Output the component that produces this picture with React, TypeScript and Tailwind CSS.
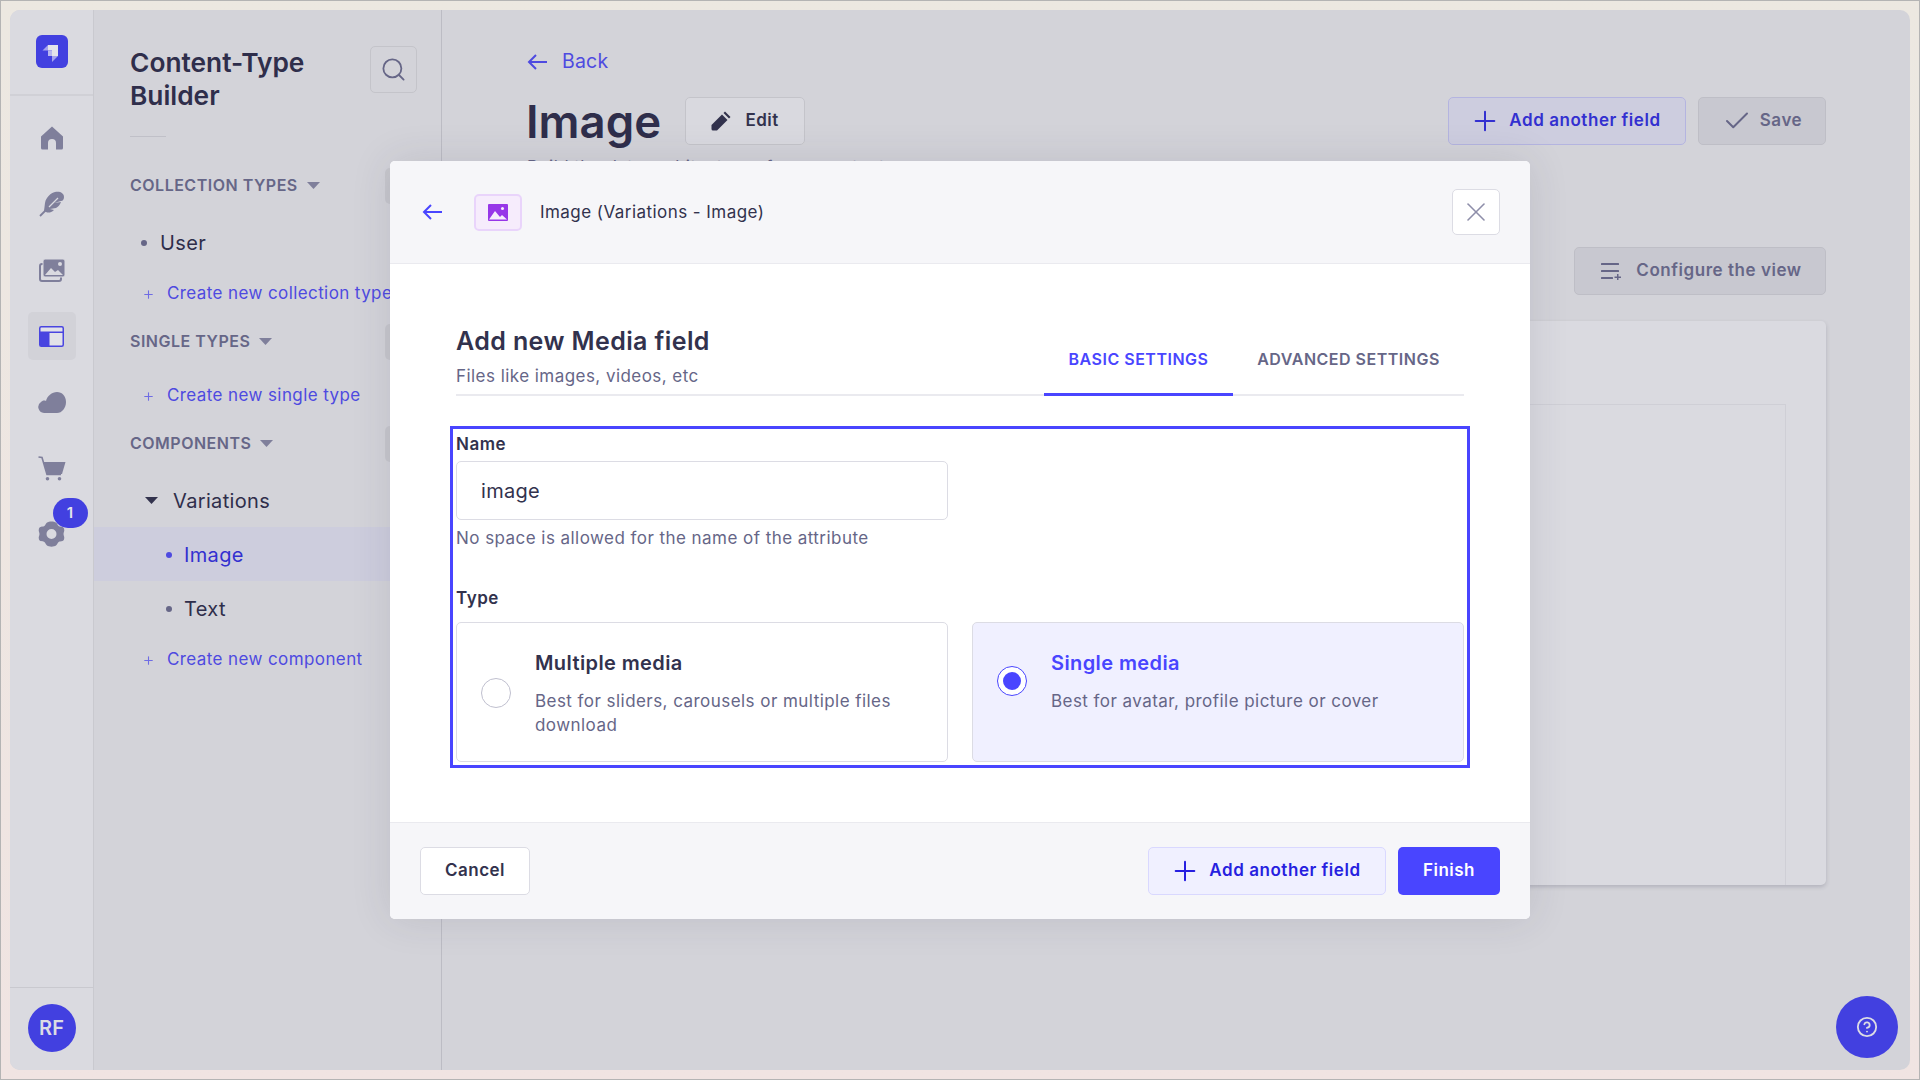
import React from "react";
import { Plus, Check, X, Search, CircleHelp } from "lucide-react";

const NAVC = "#7f7f9b";

function Arrow({ color }: { color: string }) {
  return (
    <svg width="20" height="16" viewBox="0 0 20 16" fill="none" stroke={color} strokeWidth="2">
      <path d="M20 8H2M9 1 2 8l7 7" />
    </svg>
  );
}
function Logo() {
  return (
    <svg width="32" height="33" viewBox="0 0 32 33">
      <rect width="32" height="33" rx="6" fill="#4240e0" />
      <path d="M12 10h10v11h-6v-5.5h-4z" fill="#e4e4ea" />
      <path d="M12 10v5.5H6.5z" fill="#a5a3ee" />
      <path d="M16 21h6l-6 6z" fill="#a5a3ee" />
      <path d="M12 15.5h4V21h-4z" fill="#b9b8ef" />
    </svg>
  );
}
function HomeI() {
  return (
    <svg width="24" height="24" viewBox="0 0 24 24" fill={NAVC}>
      <path d="M12 .5 1 10.5V22a1.5 1.5 0 0 0 1.5 1.5H8V17a4 4 0 0 1 8 0v6.5h5.5A1.5 1.5 0 0 0 23 22V10.5z" />
    </svg>
  );
}
function FeatherI() {
  return (
    <svg width="26" height="26" viewBox="0 0 26 26" fill={NAVC}>
      <path d="M16 1c5-1 9 1 9 5 0 2-1 4-3 4l-7 2 7-1c-1 3-3 5-5 6l-6 1 4 1c-3 3-6 3-8 2l-2-1 1-8c1-6 6-10 10-11z" />
      <path d="M1 25 17 9" stroke={NAVC} strokeWidth="1.8" fill="none" />
      <path d="M10 16 19 7" stroke="#dadae0" strokeWidth="1.3" fill="none" />
    </svg>
  );
}
function ImagesI() {
  return (
    <svg width="26" height="23" viewBox="0 0 26 23">
      <rect x="1" y="5" width="21" height="17" rx="2" fill="none" stroke={NAVC} strokeWidth="2" />
      <rect x="4" y="0" width="22" height="18" rx="2" fill={NAVC} stroke="#dadae0" strokeWidth="1" />
      <circle cx="21" cy="5" r="2" fill="#dadae0" />
      <path d="M6 16l6-7 4 4 3-2 5 5z" fill="#dadae0" />
    </svg>
  );
}
function LayoutI() {
  return (
    <svg width="25" height="21" viewBox="0 0 25 21">
      <rect x="0.75" y="0.75" width="23.5" height="19.5" rx="1.5" fill="#e2e2e8" stroke="#4945e0" strokeWidth="1.5" />
      <path d="M1 5.5h23V7H10.5v13H1z" fill="#4945e0" />
    </svg>
  );
}
function CloudI() {
  return (
    <svg width="28" height="21" viewBox="0 0 28 21" fill={NAVC}>
      <path d="M6 21a6 6 0 0 1-3-11c1-1 3-2 5-1 1-5 6-9 11-9 5 0 9 4 9 10 0 6-4 11-9 11z" />
    </svg>
  );
}
function CartI() {
  return (
    <svg width="28" height="25" viewBox="0 0 28 25">
      <path d="M0.5 1 4 1.5 9 18.5h14" fill="none" stroke={NAVC} strokeWidth="1.6" />
      <path d="M5.5 6h22l-3.5 12H9z" fill={NAVC} />
      <circle cx="9.5" cy="22.7" r="1.8" fill={NAVC} />
      <circle cx="21.5" cy="22.7" r="1.8" fill={NAVC} />
    </svg>
  );
}
function GearI() {
  return (
    <svg width="27" height="26" viewBox="0 0 27 26" fill={NAVC}>
      <path
        fillRule="evenodd"
        d="M9 1.5C11 0 16 0 18 1.5c1.5 1 1.5 3 3 3.7 1.7.8 4 0 5 2.3.9 2.6-.5 3.5-.5 5.5s1.400 3 .5 5.500c-1 2.300-3.300 1.500-5 2.300-1.500.7-1.500 2.700-3 3.700-2 1.500-7 1.500-9 0-1.500-1-1.500-3-3-3.700-1.700-.8-4 0-5-2.300-.9-2.500.5-3.500.5-5.500s-1.400-2.900-.5-5.500c1-2.300 3.300-1.500 5-2.300 1.500-.7 1.500-2.700 3-3.700zM13.500 8a5 5 0 1 0 0 10 5 5 0 0 0 0-10z"
      />
    </svg>
  );
}
function PencilI() {
  return (
    <svg width="20" height="20" viewBox="0 0 20 20" fill="#32324d">
      <path d="M0.500 14 11 3.500l5.500 5.500L6 19.500H2a1.500 1.500 0 0 1-1.500-1.500z" />
      <path d="M12.500 2 14 .5 19.500 6 18 7.500z" />
    </svg>
  );
}
function ConfigI() {
  return (
    <svg width="20" height="18" viewBox="0 0 20 18" fill="#666687">
      <rect x="0" y="1" width="18" height="2" rx=".5" />
      <rect x="0" y="8" width="18" height="2" rx=".5" />
      <rect x="0" y="15" width="12" height="2" rx=".5" />
      <path d="M16 12h1.500v2.500H20V16h-2.500v2H16v-2h-2.500v-1.500H16z" />
    </svg>
  );
}
function PictureI() {
  return (
    <svg width="20" height="17" viewBox="0 0 20 17">
      <rect width="20" height="17" rx="1" fill="#9736e8" />
      <circle cx="14.500" cy="4.500" r="1.500" fill="#f6ecfc" />
      <path d="M1 15.500 7 7l5 6 2-2 5 4.500z" fill="#f6ecfc" />
    </svg>
  );
}
function Caret({ color = "#7f7f9b" }: { color?: string }) {
  return (
    <svg width="13" height="7" viewBox="0 0 13 7" fill={color}>
      <path d="M0 0h13L6.500 7z" />
    </svg>
  );
}

function NavIcon({ children, active }: { children: React.ReactNode; active?: boolean }) {
  return (
    <div className={`relative flex h-[48px] w-[48px] items-center justify-center rounded-[5px] ${active ? "bg-[#d2d2d8]" : ""}`}>
      {children}
    </div>
  );
}

function SectionRow({ label, className }: { label: string; className: string }) {
  return (
    <div className={`flex h-[30px] items-center justify-between pr-[20px] ${className}`}>
      <div className="flex items-center gap-[9px] pb-[2px] text-[16px] font-semibold tracking-[0.5px] text-[#666687]">
        <span>{label}</span>
        <Caret />
      </div>
      <div className="h-[36px] w-[36px] rounded-[5px] bg-[#c7c7cd]" />
    </div>
  );
}

function CreateRow({ label, className }: { label: string; className: string }) {
  return (
    <div className={`flex h-[40px] items-center whitespace-nowrap pl-[12px] text-[17px] tracking-[0.4px] text-[#4e4ae0] ${className}`}>
      <Plus size={13} strokeWidth={2} className="mr-[12px] shrink-0 text-[#6f6ce4]" />
      <span>{label}</span>
    </div>
  );
}

function OptionCard({
  title,
  desc,
  selected,
}: {
  title: string;
  desc: React.ReactNode;
  selected?: boolean;
}) {
  return (
    <div
      className={`flex h-[140px] items-start rounded-[5px] border pl-[24px] pt-[25px] ${
        selected ? "border-[#dcdce4] bg-[#f0f0ff]" : "border-[#dcdce4] bg-white"
      }`}
    >
      <div className="flex items-center gap-[24px]">
        <div
          className={`flex h-[30px] w-[30px] shrink-0 items-center justify-center rounded-full border ${
            selected ? "border-[#4945ff] bg-white" : "border-[#c0c0cf] bg-white"
          }`}
        >
          {selected && <div className="h-[18px] w-[18px] rounded-full bg-[#4945ff]" />}
        </div>
        <div>
          <div className={`pt-[2px] text-[20px] font-semibold leading-[26px] tracking-[0.4px] ${selected ? "text-[#4945ff]" : "text-[#32324d]"}`}>{title}</div>
          <div className="mt-[13px] text-[17px] leading-[24px] tracking-[0.45px] text-[#666687]">{desc}</div>
        </div>
      </div>
    </div>
  );
}

export default function App() {
  return (
    <div className="relative h-[1080px] w-[1920px] overflow-hidden border border-[#b4b4b4] bg-gradient-to-b from-[#ece8e1] to-[#f0e4e2] p-[9px] font-['Inter',sans-serif]">
      <div className="flex h-full w-full overflow-hidden rounded-[10px] bg-[#d3d3d9]">
        {/* Main nav */}
        <div className="flex w-[84px] shrink-0 flex-col border-r border-[#c9c9cf] bg-[#dadae0]">
          <div className="flex h-[86px] shrink-0 items-start justify-center border-b-2 border-[#d0d0d6] pt-[25px]">
            <Logo />
          </div>
          <div className="flex flex-1 flex-col items-center gap-[18px] pt-[18px]">
            <NavIcon><HomeI /></NavIcon>
            <NavIcon><FeatherI /></NavIcon>
            <NavIcon><ImagesI /></NavIcon>
            <NavIcon active><LayoutI /></NavIcon>
            <NavIcon><CloudI /></NavIcon>
            <NavIcon><CartI /></NavIcon>
            <NavIcon>
              <GearI />
              <div className="absolute left-[25px] top-[-12px] flex h-[30px] w-[35px] items-center justify-center rounded-full bg-[#4240e0] text-[15px] font-semibold text-[#e4e4ea]">
                1
              </div>
            </NavIcon>
          </div>
          <div className="flex h-[83px] shrink-0 items-start justify-center border-t border-[#c9c9cf] pt-[16px]">
            <div className="flex h-[48px] w-[48px] items-center justify-center rounded-full bg-[#4240e0] text-[20px] font-semibold text-[#dcdce4]">
              RF
            </div>
          </div>
        </div>

        {/* Sub nav */}
        <div className="w-[348px] shrink-0 overflow-hidden border-r border-[#bcbcc4] pl-[36px] pt-[35px]">
          <div className="flex items-start justify-between pr-[24px]">
            <div className="pt-[1px] text-[26.3px] font-semibold leading-[33px] text-[#2f2e4b]">
              Content-Type
              <br />
              Builder
            </div>
            <div className="mt-[1px] flex h-[47px] w-[47px] items-center justify-center rounded-[5px] border border-[#c4c4ca]">
              <Search size={27} strokeWidth={1.6} className="text-[#666687]" />
            </div>
          </div>
          <div className="mt-[24px] h-px w-[36px] bg-[#c0c0c8]" />
          <SectionRow label="COLLECTION TYPES" className="mt-[34px]" />
          <div className="mt-[20px] flex h-[44px] items-center pl-[11px] text-[20px] tracking-[0.35px] text-[#2f2e4b]">
            <span className="mr-[13px] h-[6px] w-[6px] rounded-full bg-[#666687]" />
            User
          </div>
          <CreateRow label="Create new collection type" className="mt-[9px]" />
          <SectionRow label="SINGLE TYPES" className="mt-[13px]" />
          <CreateRow label="Create new single type" className="mt-[19px]" />
          <SectionRow label="COMPONENTS" className="mt-[13px]" />
          <div className="mt-[14px] flex h-[54px] items-center pl-[15px] pt-[1px] text-[20px] tracking-[0.35px] text-[#2f2e4b]">
            <span className="mr-[15px]"><Caret color="#32324d" /></span>
            Variations
          </div>
          <div className="-ml-[36px] flex h-[54px] items-center bg-[#cdcddd] pl-[72px] pt-[1px] text-[20px] tracking-[0.35px] text-[#3330d0]">
            <span className="mr-[12px] h-[6px] w-[6px] rounded-full bg-[#4e4ae0]" />
            Image
          </div>
          <div className="flex h-[54px] items-center pl-[36px] pt-[1px] text-[20px] tracking-[0.35px] text-[#2f2e4b]">
            <span className="mr-[12px] h-[6px] w-[6px] rounded-full bg-[#666687]" />
            Text
          </div>
          <CreateRow label="Create new component" className="mt-[5px]" />
        </div>

        {/* Main */}
        <div className="flex min-w-0 flex-1 flex-col pl-[85px] pr-[84px] pt-[38px]">
          <div className="flex h-[28px] items-center text-[19.5px] tracking-[0.2px] text-[#4e4ae0]">
            <span className="mr-[15px]"><Arrow color="#4e4ae0" /></span>
            Back
          </div>
          <div className="mt-[21px] flex h-[48px] items-center justify-between">
            <div className="-ml-[1px] flex items-center gap-[24px]">
              <div className="pt-[2px] text-[45.5px] font-semibold leading-[48px] text-[#2f2e4b]">Image</div>
              <div className="flex h-[48px] w-[120px] items-center justify-center gap-[14px] rounded-[5px] border border-[#c4c4ca] bg-[#d9d9df] text-[17px] font-semibold tracking-[0.5px] text-[#32324d]">
                <PencilI />
                Edit
              </div>
            </div>
            <div className="flex items-center gap-[12px]">
              <div className="flex h-[48px] w-[238px] items-center justify-center gap-[8px] rounded-[5px] border border-[#b4b4e0] bg-[#cdcddf] pr-[4px] text-[17px] font-semibold tracking-[0.55px] text-[#3330d0]">
                <Plus size={32} strokeWidth={1.5} />
                Add another field
              </div>
              <div className="flex h-[48px] w-[128px] items-center justify-center gap-[8px] rounded-[5px] border border-[#bebec6] bg-[#c8c8d0] text-[17px] font-semibold tracking-[0.55px] text-[#666687]">
                <Check size={30} strokeWidth={1.6} />
                Save
              </div>
            </div>
          </div>
          <div className="mt-[10px] h-[24px] whitespace-nowrap text-[17px] leading-[24px] tracking-[0.45px] text-[#666687]">
            Build the data architecture of your content
          </div>
          <div className="mt-[68px] flex justify-end">
            <div className="flex h-[48px] w-[252px] items-center justify-center gap-[15px] rounded-[5px] border border-[#bebec6] bg-[#c8c8d0] pl-[3px] text-[17px] font-semibold tracking-[0.55px] text-[#666687]">
              <ConfigI />
              Configure the view
            </div>
          </div>
          <div className="mt-[26px] h-[564px] rounded-[5px] bg-[#dadae0] pr-[40px] pt-[83px] shadow-[0_2px_4px_rgba(50,50,77,0.2)]">
            <div className="h-full border-r border-t border-[#cfcfd6]" />
          </div>
        </div>
      </div>

      {/* Help */}
      <div className="absolute left-[1835px] top-[995px] flex h-[62px] w-[62px] items-center justify-center rounded-full bg-[#4240e0]">
        <CircleHelp size={22} strokeWidth={2} className="text-[#dcdce4]" />
      </div>

      {/* Modal */}
      <div className="absolute left-[389px] top-[160px] flex h-[758px] w-[1140px] flex-col overflow-hidden rounded-[5px] bg-white shadow-[0_0_40px_rgba(50,50,77,0.12)]">
        <div className="flex h-[103px] shrink-0 items-center border-b border-[#eaeaef] bg-[#f6f6f9] pl-[32px] pr-[30px]">
          <Arrow color="#4945ff" />
          <div className="ml-[32px] flex h-[37px] w-[48px] items-center justify-center rounded-[5px] border-2 border-[#e9d4fb] bg-[#f6ecfc]">
            <PictureI />
          </div>
          <div className="ml-[18px] pt-[1px] text-[17px] tracking-[0.45px] text-[#32324d]">Image (Variations - Image)</div>
          <div className="ml-auto flex h-[46px] w-[48px] items-center justify-center rounded-[5px] border border-[#dcdce4] bg-white">
            <X size={32} strokeWidth={1.2} className="text-[#8e8ea9]" />
          </div>
        </div>

        <div className="flex-1 px-[66px] pt-[62px]">
          <div className="flex items-end justify-between border-b-2 border-[#eaeaef]">
            <div className="pb-[6px]">
              <div className="text-[25px] font-semibold leading-[30px] tracking-[0.4px] text-[#32324d]">Add new Media field</div>
              <div className="mt-[8px] text-[17px] leading-[24px] tracking-[0.45px] text-[#666687]">Files like images, videos, etc</div>
            </div>
            <div className="-mb-[2px] flex text-[16px] font-semibold leading-[20px] tracking-[0.5px]">
              <div className="flex w-[189px] justify-center border-b-[3px] border-[#4945ff] pb-[24px] text-[#4945ff]">BASIC SETTINGS</div>
              <div className="flex w-[231px] justify-center border-b-[3px] border-transparent px-[3px] pb-[24px] text-[#666687]">ADVANCED SETTINGS</div>
            </div>
          </div>

          <div className="-ml-[6px] -mr-[6px] mt-[30px] border-[3px] border-[#4945ff] px-[3px] pb-[3px] pt-[5px]">
            <div className="text-[17px] font-semibold leading-[20px] tracking-[0.5px] text-[#32324d]">Name</div>
            <div className="mt-[7px] flex h-[59px] w-[492px] items-center rounded-[5px] border border-[#dcdce4] pl-[24px] text-[20px] tracking-[0.3px] text-[#32324d]">
              image
            </div>
            <div className="mt-[7px] text-[17px] leading-[22px] tracking-[0.45px] text-[#666687]">No space is allowed for the name of the attribute</div>
            <div className="mt-[39px] text-[17px] font-semibold leading-[20px] tracking-[0.5px] text-[#32324d]">Type</div>
            <div className="mt-[14px] grid w-[1008px] grid-cols-2 gap-[24px]">
              <OptionCard
                title="Multiple media"
                desc={
                  <>
                    Best for sliders, carousels or multiple files
                    <br />
                    download
                  </>
                }
              />
              <OptionCard selected title="Single media" desc="Best for avatar, profile picture or cover" />
            </div>
          </div>
        </div>

        <div className="flex h-[97px] shrink-0 items-center justify-between border-t border-[#eaeaef] bg-[#f6f6f9] px-[30px]">
          <div className="flex h-[48px] w-[110px] items-center justify-center rounded-[5px] border border-[#dcdce4] bg-white text-[17px] font-semibold tracking-[0.5px] text-[#32324d]">
            Cancel
          </div>
          <div className="flex items-center gap-[12px]">
            <div className="flex h-[48px] w-[238px] items-center justify-center gap-[8px] rounded-[5px] border border-[#d9d8ff] bg-[#f0f0ff] pr-[4px] text-[17px] font-semibold tracking-[0.55px] text-[#271fe0]">
              <Plus size={32} strokeWidth={1.5} />
              Add another field
            </div>
            <div className="flex h-[48px] w-[102px] items-center justify-center rounded-[5px] bg-[#4945ff] text-[17px] font-semibold tracking-[0.5px] text-white">
              Finish
            </div>
          </div>
        </div>
      </div>
    </div>
  );
}
